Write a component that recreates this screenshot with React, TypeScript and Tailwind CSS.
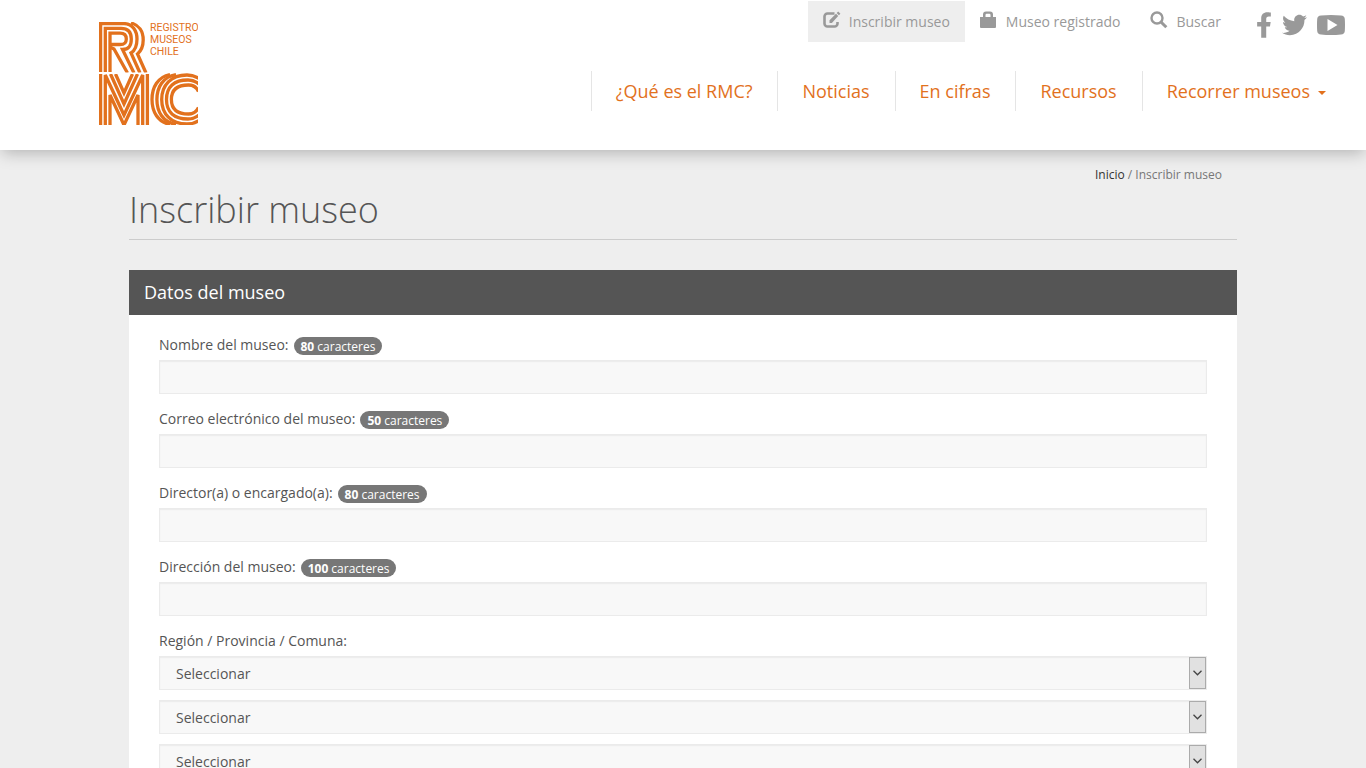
import * as React from "react";
import { FaFacebookF, FaTwitter } from "react-icons/fa";

interface TextFieldProps {
    id: string;
    label: string;
    max: number;
    type?: string;
}

const textFields: TextFieldProps[] = [
    { id: "nombre", label: "Nombre del museo:", max: 80 },
    { id: "correo", label: "Correo electrónico del museo:", max: 50, type: "email" },
    { id: "director", label: "Director(a) o encargado(a):", max: 80 },
    { id: "direccion", label: "Dirección del museo:", max: 100 },
];

const places = ["Región", "Provincia", "Comuna"];

const menu = ["¿Qué es el RMC?", "Noticias", "En cifras", "Recursos"];

const inputClass =
    "block w-full h-[34px] border border-[#ebebeb] bg-[#f8f8f8] text-sm text-[#555555] shadow-[inset_0_1px_1px_#ebebeb] outline-none";

// parallel lines of the emblem
const logoLines = [
    "M100.600 72V23.600H124C132.500 23.600 137 31 137 39C137 46 135 50.500 131 53L140 73",
    "M105.300 72V28.300H121C128.500 28.300 131.300 32 131.300 39C131.300 46 129 49.500 122.500 49.500L134 73",
    "M110 72V33.200H120C124.500 33.200 126.300 35 126.300 39C126.300 43 124.500 44.500 120 44.500H111",
    "M110 47L114 49L127.500 73",
    "M131 23C139 25 143.200 31.500 143.200 40C143.200 46 141 51 137.500 54L146 73",
    "M100.600 126V74",
    "M147.400 126V74",
    "M105.300 126V75L124 115L142.700 75V126",
    "M110 126V95L124 125L138 95V126",
    "M110.500 74L124 104L137.500 74",
    "M115.500 74L124 93L132.500 74",
    "M170 74.500C158 77 152 87 152 99.500S158 122 170 124.500",
    "M176 74.500C163 77 156.900 87 156.900 99.500S163 122 176 124.500",
    "M199 78.500C195 76 191 75 187 75C171 75 161.700 85 161.700 99.500S171 124 187 124C191 124 195 123 199 120.500",
    "M199 84C196 81.500 192 80 188 80C174 80 166.500 87 166.500 99.500S174 119 188 119C192 119 196 117.500 199 115",
    "M198.500 91.500C196.500 87 193 85 188.500 85C177 85 171.400 90 171.400 99.500S177 114 188.500 114C193 114 196.500 112 198.500 107.500",
];

const Logo: React.FC = () => (
    <svg viewBox="99 22 99 103" className="w-[99px] h-[103px]" fill="none" role="img" aria-label="Registro Museos Chile">
        <g stroke="#e2711d" strokeWidth={3.3}>
            {logoLines.map((d) => (
                <path key={d} d={d} />
            ))}
        </g>
        <path d="M99 73.200H150" stroke="#ffffff" strokeWidth={1.6} />
        <g fill="#e2711d" fontFamily="Roboto, sans-serif" fontSize={10.5}>
            <text x={150} y={31}>REGISTRO</text>
            <text x={150} y={43}>MUSEOS</text>
            <text x={150} y={55}>CHILE</text>
        </g>
    </svg>
);

const EditIcon: React.FC = () => (
    <svg viewBox="0 0 18 18" className="mb-1 w-[18px] h-[18px]" fill="none" stroke="currentColor" aria-hidden="true">
        <path d="M11.500 2.500H4.500A3 3 0 0 0 1.500 5.500V12.500A3 3 0 0 0 4.500 15.500H11.500A3 3 0 0 0 14.500 12.500V11" strokeWidth={2.6} />
        <path d="M6.500 12V9.300L13 2.800L15.200 5L8.900 12ZM13.700 2.100L15.200 .6L17.400 2.800L15.900 4.300Z" fill="currentColor" stroke="none" />
    </svg>
);

const LockIcon: React.FC = () => (
    <svg viewBox="0 0 18 18" className="mb-1 w-[18px] h-[18px]" fill="currentColor" aria-hidden="true">
        <path fillRule="evenodd" d="M3 6V3.500A3 3 0 0 1 6 .5H10A3 3 0 0 1 13 3.500V6H16V16A1 1 0 0 1 15 17H1A1 1 0 0 1 0 16V6ZM5.500 6H10.500V4A1.200 1.200 0 0 0 9.300 2.800H6.700A1.200 1.200 0 0 0 5.500 4Z" />
    </svg>
);

const SearchIcon: React.FC = () => (
    <svg viewBox="0 0 18 18" className="mb-1 w-[18px] h-[18px]" fill="none" stroke="currentColor" aria-hidden="true">
        <circle cx={7} cy={7} r={5.500} strokeWidth={2.4} />
        <path d="M11 11L16.300 16.300" strokeWidth={3} />
    </svg>
);

const YoutubeIcon: React.FC = () => (
    <svg viewBox="0 0 28 20" className="w-7 h-5" fill="currentColor" aria-hidden="true">
        <path fillRule="evenodd" d="M4 .5Q14 -.5 24 .5Q27.500 .7 27.800 4Q28.200 10 27.800 16Q27.500 19.300 24 19.500Q14 20.500 4 19.500Q.5 19.300 .2 16Q-.2 10 .2 4Q.5 .7 4 .5ZM10.500 4V16L20.500 10Z" />
    </svg>
);

const TextField: React.FC<TextFieldProps> = ({ id, label, max, type = "text" }) => (
    <div className="mb-[15px]">
        <label htmlFor={id} className="flex items-center h-5 mb-[5px]">
            {label}
            <span className="mt-px ml-[5px] px-[7px] h-[18px] leading-[19px] rounded-[10px] bg-[#777777] text-xs text-white">
                <b>{max}</b> caracteres
            </span>
        </label>
        <input id={id} type={type} maxLength={max} className={`${inputClass} px-3`} />
    </div>
);

const PlaceSelect: React.FC<{ label: string }> = ({ label }) => (
    <div className="grid mb-[10px]">
        <select
            aria-label={label}
            className={`${inputClass} col-start-1 row-start-1 appearance-none rounded-none px-4 pt-0.5`}
        >
            <option>Seleccionar</option>
        </select>
        <span className="pointer-events-none col-start-1 row-start-1 justify-self-end m-px flex w-[17px] items-center justify-center border border-[#ababab] bg-[#e1e1e1]">
            <svg viewBox="0 0 9 6" className="w-[9px] h-1.5" fill="none" stroke="#444444" strokeWidth={1.3} aria-hidden="true">
                <path d="M.5 .8L4.500 4.800L8.500 .8" />
            </svg>
        </span>
    </div>
);

const App: React.FC = () => (
    <div className="h-screen overflow-y-auto [scrollbar-width:none] bg-[#eeeeee] font-['Open_Sans',sans-serif] text-sm leading-5 text-[#555555]">
        <header className="relative flex h-[150px] items-start justify-between bg-white pl-[99px] shadow-[0_5px_15px_-2px_rgba(0,0,0,0.25)]">
            <a href="#inicio" className="mt-[22px]">
                <Logo />
            </a>
            <div className="flex flex-col items-end">
                <div className="flex items-start pt-px pr-[21px] text-[#999999]">
                    <a href="#inscribir" className="flex h-[41px] items-center gap-2 bg-[#eeeeee] px-[15px]">
                        <EditIcon />
                        Inscribir museo
                    </a>
                    <a href="#registrado" className="flex h-[41px] items-center gap-2 px-[15px]">
                        <LockIcon />
                        Museo registrado
                    </a>
                    <a href="#buscar" className="flex h-[41px] items-center gap-2 px-[15px]">
                        <SearchIcon />
                        Buscar
                    </a>
                    <div className="ml-5 flex h-12 items-center gap-[10px]">
                        <a href="#facebook" aria-label="Facebook">
                            <FaFacebookF className="h-[26px] w-4" />
                        </a>
                        <a href="#twitter" aria-label="Twitter">
                            <FaTwitter className="h-[26px] w-[25px]" />
                        </a>
                        <a href="#youtube" aria-label="YouTube">
                            <YoutubeIcon />
                        </a>
                    </div>
                </div>
                <nav className="mt-[22px] mr-4 flex text-lg leading-10 text-[#e2711d]">
                    {menu.map((item) => (
                        <a key={item} href="#menu" className="border-l border-[#e5e5e5] pr-[25px] pl-6">
                            {item}
                        </a>
                    ))}
                    <button type="button" className="flex items-center border-l border-[#e5e5e5] px-6">
                        Recorrer museos
                        <span className="mt-1 ml-2 border-x-4 border-t-4 border-x-transparent border-t-[#e2711d]" />
                    </button>
                </nav>
            </div>
        </header>

        <main className="mx-auto max-w-[1138px] px-[15px]">
            <nav aria-label="Ruta" className="pt-[15px] pr-[15px] text-right text-xs leading-5 text-[#777777]">
                <a href="#inicio" className="text-[#333333]">Inicio</a> / Inscribir museo
            </nav>
            <h1 className="mb-[30px] border-b border-[#cccccc] pt-[5px] pb-[9px] text-4xl leading-10 font-light">
                Inscribir museo
            </h1>
            <form className="bg-white">
                <h2 className="bg-[#555555] px-[15px] text-lg leading-[45px] text-white">Datos del museo</h2>
                <div className="px-[30px] pt-5 pb-5">
                    {textFields.map((field) => (
                        <TextField key={field.id} {...field} />
                    ))}
                    <fieldset>
                        <legend className="mb-[5px]">Región / Provincia / Comuna:</legend>
                        {places.map((place) => (
                            <PlaceSelect key={place} label={place} />
                        ))}
                    </fieldset>
                </div>
            </form>
        </main>
    </div>
);

export default App;
